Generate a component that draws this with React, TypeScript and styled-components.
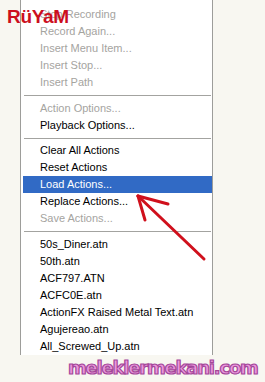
import React from "react";
import styled, { createGlobalStyle } from "styled-components";

const Global = createGlobalStyle`
  html, body { margin: 0; padding: 0; background: #f8f7f1; }
  body { font-family: "Liberation Sans", Arial, sans-serif; }
`;

const Page = styled.div`
  position: relative;
  width: 265px;
  height: 382px;
  overflow: hidden;
  background: #f8f7f1;
`;

const Menu = styled.div`
  margin-left: 20px;
  width: 191px;
  border-left: 1px solid #9d9d9a;
  border-right: 1px solid #9d9d9a;
  background: #ffffff;
  padding: 6px 0 0 0;
  height: 349px;
  box-sizing: content-box;
  display: flex;
  flex-direction: column;
`;

const Item = styled.div<{ $disabled?: boolean; $active?: boolean }>`
  height: 17px;
  line-height: 17px;
  font-size: 11px;
  padding-left: 17px;
  margin-left: 2px;
  white-space: nowrap;
  color: ${(p) => (p.$active ? "#ffffff" : p.$disabled ? "#a5a49f" : "#000000")};
  background: ${(p) => (p.$active ? "#316ac5" : "transparent")};
`;

const Sep = styled.div`
  height: 9px;
  display: flex;
  align-items: center;
  padding: 0 1px 0 3px;
  &::after {
    content: "";
    flex: 1;
    height: 1px;
    background: #a3a3a0;
  }
`;

const Brand = styled.div`
  position: absolute;
  left: 7px;
  top: 6px;
  font-family: "Liberation Sans", Arial, sans-serif;
  font-weight: bold;
  font-size: 19px;
  letter-spacing: -0.3px;
  color: #cc0f1e;
`;

const Site = styled.div`
  margin: 0 0 0 68px;
  height: 27px;
  line-height: 25px;
  font-family: "DejaVu Sans", sans-serif;
  font-weight: bold;
  font-size: 18px;
  letter-spacing: -1.2px;
  color: #ec98dd;
  -webkit-text-stroke: 1.2px #a4479a;
`;

const Arrow = styled.svg`
  position: absolute;
  left: 0;
  top: 0;
  pointer-events: none;
`;

type Entry = { label: string; disabled?: boolean; active?: boolean } | "sep";

const entries: Entry[] = [
  { label: "Stop Recording", disabled: true },
  { label: "Record Again...", disabled: true },
  { label: "Insert Menu Item...", disabled: true },
  { label: "Insert Stop...", disabled: true },
  { label: "Insert Path", disabled: true },
  "sep",
  { label: "Action Options...", disabled: true },
  { label: "Playback Options..." },
  "sep",
  { label: "Clear All Actions" },
  { label: "Reset Actions" },
  { label: "Load Actions...", active: true },
  { label: "Replace Actions..." },
  { label: "Save Actions...", disabled: true },
  "sep",
  { label: "50s_Diner.atn" },
  { label: "50th.atn" },
  { label: "ACF797.ATN" },
  { label: "ACFC0E.atn" },
  { label: "ActionFX Raised Metal Text.atn" },
  { label: "Agujereao.atn" },
  { label: "All_Screwed_Up.atn" },
];

export default function App() {
  return (
    <Page>
      <Global />
      <Menu>
        {entries.map((e, i) =>
          e === "sep" ? (
            <Sep key={i} />
          ) : (
            <Item key={i} $disabled={e.disabled} $active={e.active}>
              {e.label}
            </Item>
          )
        )}
      </Menu>
      <Site>meleklermekani.com</Site>
      <Brand>RüYaM</Brand>
      <Arrow width="265" height="382" viewBox="0 0 265 382">
        <g stroke="#d0101c" strokeWidth="3" strokeLinecap="round" fill="none">
          <line x1="204" y1="259" x2="138" y2="196" />
          <line x1="138" y1="196" x2="168" y2="204" />
          <line x1="138" y1="196" x2="145" y2="220" />
        </g>
      </Arrow>
    </Page>
  );
}
